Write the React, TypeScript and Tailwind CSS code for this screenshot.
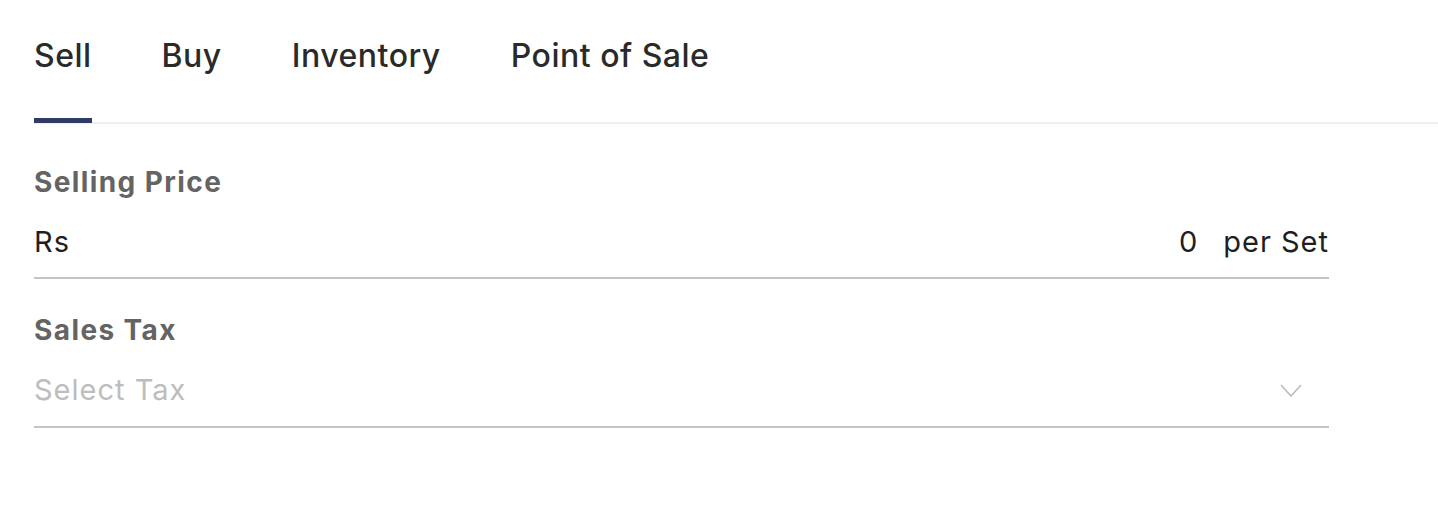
import { useState } from 'react'

const tabs = ['Sell', 'Buy', 'Inventory', 'Point of Sale']

function Field({ label, children }: { label: string; children: React.ReactNode }) {
  return (
    <div>
      <div className="text-[28px] leading-[32px] font-bold tracking-[1.4px] text-[#646464]">{label}</div>
      {children}
    </div>
  )
}

export default function App() {
  const [active, setActive] = useState('Sell')

  return (
    <div className="min-h-[514px] bg-white pl-[34px] font-['Inter','Noto_Sans',sans-serif]">
      <div className="flex gap-[70px] border-b-2 border-[#efefef] pt-[36px]">
        {tabs.map(tab => (
          <button
            key={tab}
            onClick={() => setActive(tab)}
            className="relative pb-[46px] text-[32px] leading-[40px] font-medium tracking-[0.5px] text-[#2a2a2a]"
          >
            {tab}
            {active === tab && (
              <span className="absolute left-0 right-0 bottom-[-1px] h-[5px] bg-[#2f3a66]" />
            )}
          </button>
        ))}
      </div>

      <div className="w-[1295px]">
        <div className="pt-[42px]">
          <Field label="Selling Price">
            <div className="mt-[26px] flex items-center border-b-2 border-[#c4c4c4] pb-[17px] text-[29px] leading-[36px] tracking-[1px] text-[#1f1f1f]">
              <span>Rs</span>
              <span className="ml-auto">0</span>
              <span className="ml-[25px]">per Set</span>
            </div>
          </Field>
        </div>

        <div className="pt-[35px]">
          <Field label="Sales Tax">
            <div className="mt-[26px] flex items-center border-b-2 border-[#c4c4c4] pb-[18px] text-[29px] leading-[36px] tracking-[1px] text-[#bdbdbd]">
              <span>Select Tax</span>
              <svg
                className="ml-auto mr-[27px]"
                width="22"
                height="16"
                viewBox="0 0 22 16"
                fill="none"
                stroke="#bdbdbd"
                strokeWidth="1.6"
              >
                <path d="M1 3 L11 14 L21 3" />
              </svg>
            </div>
          </Field>
        </div>
      </div>
    </div>
  )
}
